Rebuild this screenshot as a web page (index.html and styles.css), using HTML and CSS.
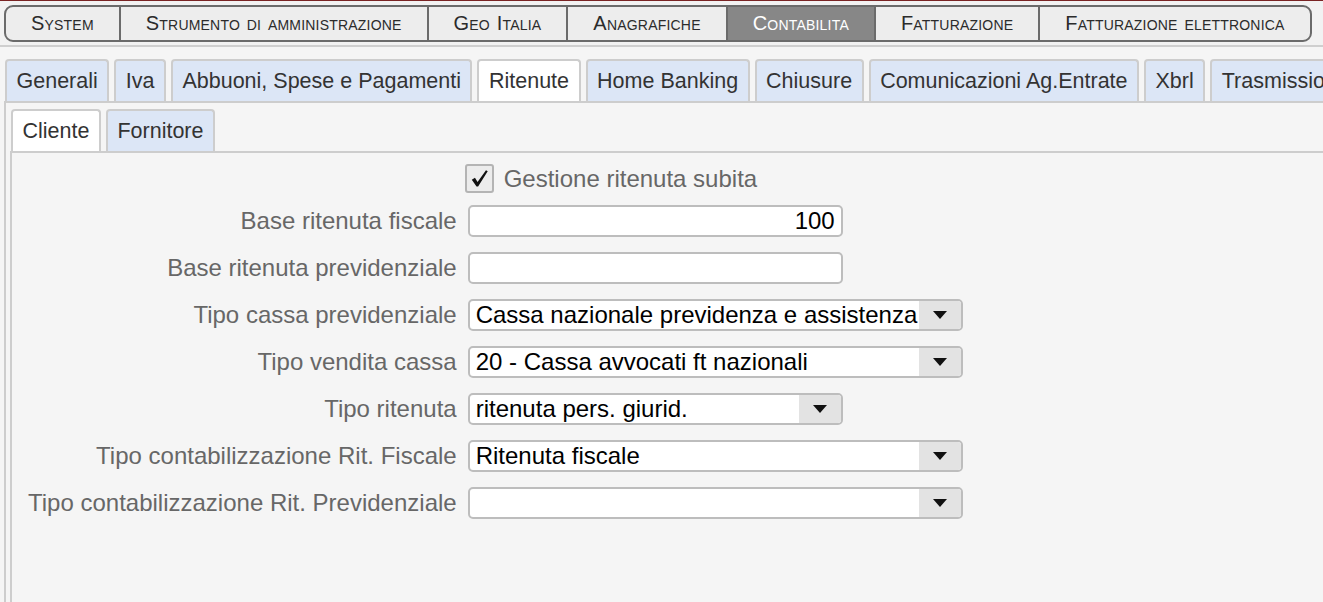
FILE: index.html
```html
<!DOCTYPE html>
<html lang="it">
<head>
<meta charset="utf-8">
<title>Contabilita - Ritenute</title>
<link rel="stylesheet" href="styles.css">
</head>
<body>
<header class="menubar">
  <ul class="menu">
    <li class="menu-item">System</li>
    <li class="menu-item">Strumento di amministrazione</li>
    <li class="menu-item">Geo Italia</li>
    <li class="menu-item">Anagrafiche</li>
    <li class="menu-item is-active">Contabilita</li>
    <li class="menu-item">Fatturazione</li>
    <li class="menu-item">Fatturazione elettronica</li>
  </ul>
</header>
<section class="tabset outer">
  <ul class="tabs">
    <li class="tab">Generali</li>
    <li class="tab">Iva</li>
    <li class="tab">Abbuoni, Spese e Pagamenti</li>
    <li class="tab is-active">Ritenute</li>
    <li class="tab">Home Banking</li>
    <li class="tab">Chiusure</li>
    <li class="tab">Comunicazioni Ag.Entrate</li>
    <li class="tab">Xbrl</li>
    <li class="tab">Trasmissioni</li>
  </ul>
  <div class="panel outer-panel">
    <section class="tabset inner">
      <ul class="tabs">
        <li class="tab is-active">Cliente</li>
        <li class="tab">Fornitore</li>
      </ul>
      <div class="panel inner-panel">
        <form class="form">
          <span class="label-spacer"></span>
          <label class="check-row">
            <span class="checkbox">
              <svg viewBox="0 0 24 24" width="21" height="21" aria-hidden="true"><path d="M3.2 13.4 L6.8 11.2 L9.8 16 L19.4 2.6 L21.4 3.8 L10.4 21.2 L8.6 21.2 Z" fill="#111"/></svg>
            </span>
            <span class="check-text">Gestione ritenuta subita</span>
          </label>

          <span class="label">Base ritenuta fiscale</span>
          <input class="field field-num field-md" type="text" value="100">

          <span class="label">Base ritenuta previdenziale</span>
          <input class="field field-md" type="text" value="">

          <span class="label">Tipo cassa previdenziale</span>
          <div class="select field-lg"><span class="select-value">Cassa nazionale previdenza e assistenza</span><span class="select-btn"></span></div>

          <span class="label">Tipo vendita cassa</span>
          <div class="select field-lg"><span class="select-value">20 - Cassa avvocati ft nazionali</span><span class="select-btn"></span></div>

          <span class="label">Tipo ritenuta</span>
          <div class="select field-md"><span class="select-value">ritenuta pers. giurid.</span><span class="select-btn"></span></div>

          <span class="label">Tipo contabilizzazione Rit. Fiscale</span>
          <div class="select field-lg"><span class="select-value">Ritenuta fiscale</span><span class="select-btn"></span></div>

          <span class="label">Tipo contabilizzazione Rit. Previdenziale</span>
          <div class="select field-lg"><span class="select-value"></span><span class="select-btn"></span></div>
        </form>
      </div>
    </section>
  </div>
</section>
</body>
</html>
```
FILE: styles.css
```css
* { box-sizing: border-box; }

html, body { height: 100%; }

body {
  margin: 0;
  height: 100vh;
  overflow: hidden;
  display: flex;
  flex-direction: column;
  background: #f5f5f5;
  border-top: 1px solid #7a2424;
  font-family: "Liberation Sans", Arial, Helvetica, sans-serif;
  color: #333;
}

ul { list-style: none; margin: 0; padding: 0; }

/* top menu */
.menubar {
  background: #f2f2f2;
  padding: 4px 0 3px 4px;
  border-bottom: 2px solid #cfcfcf;
}

.menu {
  display: flex;
  width: fit-content;
  border: 2px solid #6b6b6b;
  border-radius: 9px;
  background: #ededed;
  overflow: hidden;
}

.menu-item {
  height: 33px;
  line-height: 33px;
  padding: 0 25px;
  font-size: 20px;
  font-variant: small-caps;
  letter-spacing: 0.2px;
  word-spacing: 1px;
  color: #2b2b2b;
  white-space: nowrap;
  border-right: 2px solid #6b6b6b;
}

.menu-item:last-child { border-right: 0; }

.menu-item.is-active {
  background: #878787;
  color: #fff;
}

/* tab sets */
.tabset {
  display: flex;
  flex-direction: column;
  flex: 1;
  min-height: 0;
}

.tabset.outer { padding: 12px 0 0 4px; }

.tabs {
  display: flex;
  gap: 5px;
  padding-left: 1px;
  white-space: nowrap;
  overflow: hidden;
  position: relative;
  z-index: 1;
}

.tab {
  height: 42px;
  line-height: 40px;
  padding: 0 9.5px;
  font-size: 21.5px;
  color: #333;
  background: #dce6f6;
  border: 2px solid #cdcdcd;
  border-bottom: 0;
  border-radius: 4px 4px 0 0;
  flex-shrink: 0;
}

.tab.is-active {
  background: #fff;
  height: 44px;
  margin-bottom: -2px;
}

.panel {
  flex: 1;
  border-top: 2px solid #cdcdcd;
  border-left: 2px solid #cdcdcd;
  background: #f5f5f5;
  display: flex;
  flex-direction: column;
}

.outer-panel { padding: 6px 0 0 4px; }

.tabset.inner .tabs { padding-left: 1px; }

.inner-panel { padding: 11px 0 0 16px; }

/* form */
.form {
  display: grid;
  grid-template-columns: max-content max-content;
  column-gap: 11px;
  row-gap: 15px;
  align-items: center;
  justify-content: start;
}

.label {
  text-align: right;
  font-size: 24px;
  color: #676767;
  white-space: nowrap;
}

.check-row {
  display: flex;
  align-items: center;
  gap: 10px;
  margin-left: -3px;
  margin-bottom: -3px;
}

.checkbox {
  width: 29px;
  height: 29px;
  border: 2px solid #b4b4b4;
  border-radius: 3px;
  background: #ececec;
  display: flex;
  align-items: center;
  justify-content: center;
}

.check-text {
  font-size: 24px;
  color: #676767;
}

.field {
  height: 32px;
  border: 2px solid #bdbdbd;
  border-radius: 5px;
  background: #fff;
  font-family: inherit;
  font-size: 24px;
  color: #000;
  padding: 0 6px;
  margin: 0;
  outline: none;
}

.field-num { text-align: right; }

.field-md { width: 375px; }
.field-lg { width: 495px; }

.select {
  height: 32px;
  border: 2px solid #bdbdbd;
  border-radius: 5px;
  background: #fff;
  display: flex;
  overflow: hidden;
}

.select-value {
  flex: 1;
  padding: 0 6px;
  font-size: 24px;
  line-height: 28px;
  color: #000;
  white-space: nowrap;
  overflow: hidden;
}

.select-btn {
  width: 42px;
  background: #e3e3e3;
  display: flex;
  align-items: center;
  justify-content: center;
}

.select-btn::after {
  content: "";
  border-left: 7px solid transparent;
  border-right: 7px solid transparent;
  border-top: 8px solid #111;
}
```
